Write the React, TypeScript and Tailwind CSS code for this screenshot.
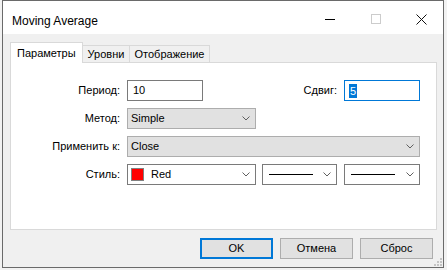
import React from "react";

function Chevron() {
  return (
    <svg width="8" height="5" viewBox="0 0 8 5" className="shrink-0">
      <path d="M0.5 0.5 L4 4 L7.5 0.5" fill="none" stroke="#606060" strokeWidth="1" />
    </svg>
  );
}

function Label({ text, w }: { text: string; w: string }) {
  return <div className={`${w} h-[21px] flex items-center justify-end mr-[7px] leading-[13px]`}>{text}</div>;
}

function GraySelect({ text, w }: { text: string; w: string }) {
  return (
    <div className={`${w} h-[21px] border border-[#adadad] bg-[#e1e1e1] flex items-center pl-[3px] pr-[5px]`}>
      <span className="flex-1 leading-[13px]">{text}</span>
      <Chevron />
    </div>
  );
}

function LineSelect({ w }: { w: string }) {
  return (
    <div className={`${w} h-[21px] border border-[#7a7a7a] bg-white flex items-center pl-[6px] pr-[5px]`}>
      <div className="w-[44px] h-[1px] bg-black" />
      <div className="flex-1" />
      <Chevron />
    </div>
  );
}

function Btn({ text, primary }: { text: string; primary?: boolean }) {
  return (
    <div
      className={`w-[73px] h-[21px] bg-[#e1e1e1] flex items-center justify-center leading-[13px] ${
        primary ? "border-2 border-[#0078d7]" : "border border-[#adadad]"
      }`}
    >
      {text}
    </div>
  );
}

export default function App() {
  return (
    <div className="w-[447px] h-[270px] bg-[#f2f2f2] pl-[2px] font-['Liberation_Sans',Arial,sans-serif] text-[11px] text-black">
      <div className="w-[442px] h-[268px] border border-[#6a6a6a] flex flex-col">
        {/* Title bar */}
        <div className="h-[33px] bg-white flex shrink-0">
          <div className="flex-1 pl-[9px] pt-[13px] text-[12px] leading-[14px]">Moving Average</div>
          <div className="flex h-[33px] pt-[3px] items-center">
            <div className="w-[46px] flex justify-center pl-[3px]">
              <div className="w-[10px] h-[1px] bg-black" />
            </div>
            <div className="w-[46px] flex justify-center pl-[3px]">
              <div className="w-[10px] h-[10px] border border-[#cccccc]" />
            </div>
            <div className="w-[46px] flex justify-center pl-[3px]">
              <svg width="11" height="11" viewBox="0 0 11 11">
                <path d="M0.5 0.5 L10.5 10.5 M10.5 0.5 L0.5 10.5" stroke="#111" strokeWidth="1" fill="none" />
              </svg>
            </div>
          </div>
        </div>

        {/* Client */}
        <div className="flex-1 bg-[#f0f0f0] pt-[8px] pl-[7px] flex flex-col">
          {/* Tabs */}
          <div className="flex items-end h-[20px]">
            <div className="relative z-10 w-[73px] h-[21px] mb-[-1px] bg-white border-t border-l border-r border-[#d9d9d9] flex items-center pl-[6px] leading-[13px]">
              Параметры
            </div>
            <div className="w-[48px] h-[17px] -ml-[1px] border-t border-l border-r border-[#d9d9d9] bg-[#f0f0f0] flex items-center justify-center leading-[13px]">
              Уровни
            </div>
            <div className="w-[81px] h-[17px] -ml-[1px] border-t border-l border-r border-[#d9d9d9] bg-[#f0f0f0] flex items-center justify-center leading-[13px]">
              Отображение
            </div>
          </div>

          {/* Panel */}
          <div className="w-[427px] h-[168px] border border-[#d9d9d9] bg-white pt-[17px] flex flex-col gap-[7px]">
            <div className="flex">
              <Label text="Период:" w="w-[109px]" />
              <div className="w-[76px] h-[21px] border border-[#7a7a7a] bg-white flex items-center pl-[5px] leading-[13px]">10</div>
              <Label text="Сдвиг:" w="w-[134px]" />
              <div className="w-[76px] h-[21px] border border-[#0078d7] bg-white flex items-center pl-[4px]">
                <span className="bg-[#0078d7] text-white h-[14px] leading-[14px] px-[1px]">5</span>
              </div>
            </div>
            <div className="flex">
              <Label text="Метод:" w="w-[109px]" />
              <GraySelect text="Simple" w="w-[129px]" />
            </div>
            <div className="flex">
              <Label text="Применить к:" w="w-[109px]" />
              <GraySelect text="Close" w="w-[293px]" />
            </div>
            <div className="flex">
              <Label text="Стиль:" w="w-[109px]" />
              <div className="w-[129px] h-[21px] border border-[#7a7a7a] bg-white flex items-center pl-[3px] pr-[5px]">
                <div className="w-[13px] h-[13px] border border-[#808080] bg-[#ff0000] shrink-0" />
                <span className="flex-1 pl-[7px] leading-[13px]">Red</span>
                <Chevron />
              </div>
              <div className="w-[6px]" />
              <LineSelect w="w-[75px]" />
              <div className="w-[7px]" />
              <LineSelect w="w-[76px]" />
            </div>
          </div>

          {/* Buttons */}
          <div className="mt-[8px] h-[29px] flex justify-end items-start">
            <div className="flex gap-[7px]">
              <Btn text="OK" primary />
              <Btn text="Отмена" />
              <Btn text="Сброс" />
            </div>
            <svg width="8" height="8" viewBox="0 0 8 8" className="self-end ml-[1px] mr-[1px] mb-[1px]">
              <rect x="6" y="0" width="2" height="2" fill="#c4c4c4" />
              <rect x="3" y="3" width="2" height="2" fill="#c4c4c4" />
              <rect x="6" y="3" width="2" height="2" fill="#c4c4c4" />
              <rect x="0" y="6" width="2" height="2" fill="#c4c4c4" />
              <rect x="3" y="6" width="2" height="2" fill="#c4c4c4" />
              <rect x="6" y="6" width="2" height="2" fill="#c4c4c4" />
            </svg>
          </div>
        </div>
      </div>
    </div>
  );
}
